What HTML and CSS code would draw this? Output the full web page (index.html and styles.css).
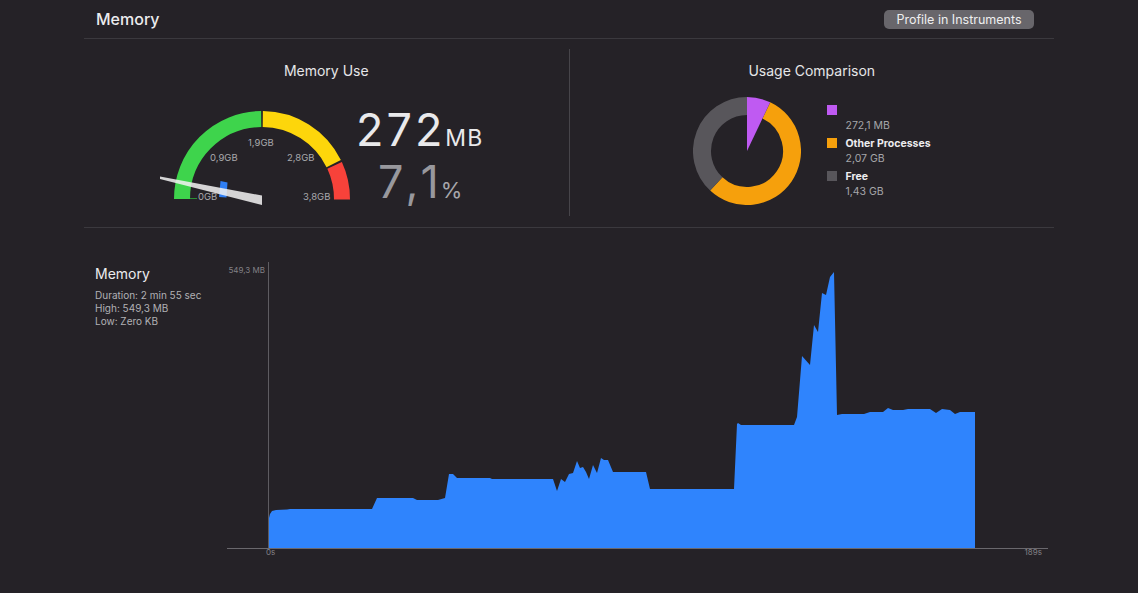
FILE: index.html
```html
<!DOCTYPE html>
<html lang="en">
<head>
    <meta charset="UTF-8">
    <title>Memory Report</title>
    <link rel="stylesheet" href="styles.css">
</head>
<body>
<div class="page">

    <div class="header">
        <div class="header-title">Memory</div>
        <button class="btn">Profile in Instruments</button>
    </div>

    <div class="overview">
        <!-- Memory use gauge -->
        <div class="panel">
            <div class="panel-title">Memory Use</div>
            <div class="gauge-row">
                <svg class="gauge" width="200" height="110" viewBox="155 100 200 110">
                    <path d="M182,199 A80,80 0 0 1 261.2,119" fill="none" stroke="#3ed44c" stroke-width="16"/>
                    <path d="M262.8,119 A80,80 0 0 1 333.7,163.6" fill="none" stroke="#fdd60b" stroke-width="16"/>
                    <path d="M334.6,165.3 A80,80 0 0 1 342,199.5" fill="none" stroke="#f7423a" stroke-width="16"/>
                    <line x1="190" y1="198.5" x2="197" y2="198.5" stroke="#2b8f37" stroke-width="1"/>
                    <text class="g-label" x="198" y="199.5">0GB</text>
                    <text class="g-label" x="210" y="161">0,9GB</text>
                    <text class="g-label" x="248" y="146">1,9GB</text>
                    <text class="g-label" x="287" y="161">2,8GB</text>
                    <text class="g-label" x="303" y="199.5">3,8GB</text>
                    <polygon points="220.5,181 227.5,182.5 226.5,197.5 219,197" fill="#2f7ff5"/>
                    <polygon points="160,176.5 262,195.5 262,205 160,179" fill="#f2f2f2" fill-opacity="0.86"/>
                </svg>
                <div class="numbers">
                    <div class="big used"><span class="num">272</span><span class="unit">MB</span></div>
                    <div class="big pct">7<span class="comma">,</span>1<span class="pct-unit">%</span></div>
                </div>
            </div>
        </div>

        <div class="divider"></div>

        <!-- Usage comparison donut -->
        <div class="panel">
            <div class="panel-title">Usage Comparison</div>
            <div class="donut-row">
                <svg class="donut" width="108" height="108" viewBox="693 97 108 108">
                    <path d="M766.4,110.4 A45,45 0 1 1 716.3,183.9" fill="none" stroke="#f6a00c" stroke-width="18"/>
                    <path d="M716.3,183.9 A45,45 0 0 1 747,106" fill="none" stroke="#58565b" stroke-width="18"/>
                    <path d="M747,151 L747,97 A54,54 0 0 1 770.2,102.3 Z" fill="#bf5af2"/>
                </svg>
                <div class="legend">
                    <div class="legend-item">
                        <div class="legend-label"><span class="swatch purple"></span></div>
                        <div class="legend-value">272,1 MB</div>
                    </div>
                    <div class="legend-item">
                        <div class="legend-label"><span class="swatch orange"></span>Other Processes</div>
                        <div class="legend-value">2,07 GB</div>
                    </div>
                    <div class="legend-item">
                        <div class="legend-label"><span class="swatch gray"></span>Free</div>
                        <div class="legend-value">1,43 GB</div>
                    </div>
                </div>
            </div>
        </div>
    </div>

    <div class="timeline">
        <div class="info">
            <div class="info-title">Memory</div>
            <div class="info-line first">Duration: 2 min 55 sec</div>
            <div class="info-line">High: 549,3 MB</div>
            <div class="info-line">Low: Zero KB</div>
        </div>
        <svg class="chart" width="834" height="310" viewBox="220 255 834 310">
            <path fill="#2f84fd" d="M268,548 L268,522 L270,514 L272,511 L276,510 L287,509.5 L290,509 L372,509 L377,498 L413,498 L417,500 L438,500 L445,498 L449,474 L453,474 L457,478 L490,478 L492,479 L553,479 L557,491 L561,479 L565,482 L569,474 L573,473 L577,461 L580,468 L583,467 L586,472 L589,479 L593,465 L597,473 L601,458 L604,460 L608,460 L613,472 L646,472 L650,489 L734,489 L737,424 L738,423 L741,425 L794,425 L797,417 L802,356 L810,365 L814,325 L818,332 L822,293 L826,295 L830,277 L834,272 L837,415 L842,414 L864,414 L870,412 L883,412 L888,408 L893,410 L903,410 L908,409 L930,409 L936,413 L942,409 L950,410 L955,414 L960,412 L975,412 L975,548 Z"/>
            <line x1="268.5" y1="262" x2="268.5" y2="548" stroke="#5e5c61" stroke-width="1"/>
            <line x1="227" y1="548.5" x2="1048" y2="548.5" stroke="#6a686d" stroke-width="1"/>
            <text class="axis-label" x="265" y="273" text-anchor="end">549,3 MB</text>
            <text class="axis-label" x="266" y="555">0s</text>
            <text class="axis-label" x="1042" y="555" text-anchor="end">189s</text>
        </svg>
    </div>

</div>
</body>
</html>
```

FILE: styles.css
```css
body {
    margin: 0;
    background-color: #252227;
    font-family: Inter, "Noto Sans", sans-serif;
    color: #e8e8ea;
}
.page {
    width: 970px;
    margin: 0 auto;
}

/* header */
.header {
    height: 38px;
    display: flex;
    align-items: center;
    justify-content: space-between;
    padding: 0 20px 0 12px;
    border-bottom: 1px solid #3b393e;
}
.header-title {
    font-size: 16px;
    font-weight: 500;
    color: #ececee;
}
.btn {
    width: 150px;
    height: 19px;
    padding: 0;
    border: none;
    border-radius: 5px;
    background-color: #68666b;
    color: #eeeeef;
    font-family: inherit;
    font-size: 12.5px;
    line-height: 19px;
}

/* overview */
.overview {
    height: 188px;
    display: grid;
    grid-template-columns: 1fr 1px 1fr;
    border-bottom: 1px solid #3b393e;
}
.divider {
    background-color: #47454a;
    margin: 10px 0 11px;
}
.panel {
    display: flex;
    flex-direction: column;
}
.panel-title {
    text-align: center;
    font-size: 14px;
    line-height: 17px;
    margin-top: 23px;
    color: #e6e6e8;
}
.gauge-row {
    display: flex;
    margin-top: 21px;
    padding-left: 71px;
}
.gauge {
    display: block;
}
.g-label {
    font-family: Inter, sans-serif;
    font-size: 9.5px;
    fill: #a9a9ad;
}
.numbers {
    margin-left: 1px;
    padding-top: 4px;
}
.big {
    font-size: 45px;
    line-height: 52px;
    white-space: nowrap;
}
.used {
    color: #e9e9eb;
}
.used .num {
    letter-spacing: 3px;
}
.unit {
    font-size: 23px;
    line-height: 1;
    letter-spacing: 1px;
}
.pct {
    color: #98989d;
    padding-left: 22px;
}
.comma {
    margin: 0 2px;
}
.pct-unit {
    font-size: 22px;
    line-height: 1;
    margin-left: 2px;
    color: #a7a7ab;
}

.donut-row {
    display: flex;
    margin-top: 18px;
    padding-left: 123px;
}
.donut {
    display: block;
}
.legend {
    margin-left: 26px;
    margin-top: 5px;
    font-size: 10.5px;
}
.legend-item {
    margin-bottom: 1px;
}
.legend-label {
    display: flex;
    align-items: center;
    height: 16px;
    font-weight: 700;
    color: #ededef;
}
.legend-value {
    line-height: 16px;
    padding-left: 19px;
    color: #a6a6aa;
}
.swatch {
    width: 10px;
    height: 10px;
    margin-right: 9px;
}
.purple { background-color: #bf5af2; }
.orange { background-color: #f6a00c; }
.gray { background-color: #58565b; }

/* timeline */
.timeline {
    display: flex;
    padding: 27px 0 0 11px;
}
.info {
    width: 125px;
}
.info-title {
    font-size: 14px;
    line-height: 17px;
    margin-top: 10px;
    color: #ececee;
}
.info-line {
    font-size: 10px;
    line-height: 13px;
    color: #b1b1b5;
}
.info-line.first {
    margin-top: 7px;
}
.chart {
    display: block;
}
.axis-label {
    font-family: Inter, sans-serif;
    font-size: 8px;
    fill: #838186;
}
```
